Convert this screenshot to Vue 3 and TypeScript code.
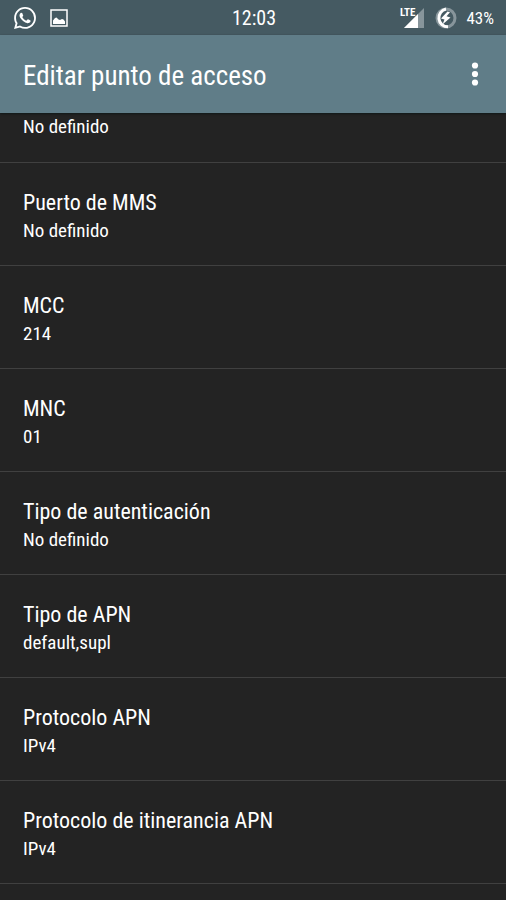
<script setup lang="ts">
interface Preference {
  title?: string
  summary: string
}

const preferences: Preference[] = [
  { summary: 'No definido' },
  { title: 'Puerto de MMS', summary: 'No definido' },
  { title: 'MCC', summary: '214' },
  { title: 'MNC', summary: '01' },
  { title: 'Tipo de autenticación', summary: 'No definido' },
  { title: 'Tipo de APN', summary: 'default,supl' },
  { title: 'Protocolo APN', summary: 'IPv4' },
  { title: 'Protocolo de itinerancia APN', summary: 'IPv4' },
]
</script>

<template>
  <div class="screen">
    <div class="status-bar">
      <div class="notifications">
        <svg class="whatsapp" viewBox="0 0 24 24" aria-hidden="true">
          <path d="M17.472 14.382c-.297-.149-1.758-.867-2.03-.967-.273-.099-.471-.148-.67.15-.197.297-.767.966-.94 1.164-.173.199-.347.223-.644.075-.297-.15-1.255-.463-2.39-1.475-.883-.788-1.48-1.761-1.653-2.059-.173-.297-.018-.458.13-.606.134-.133.298-.347.446-.52.149-.174.198-.298.298-.497.099-.198.05-.371-.025-.52-.075-.149-.669-1.612-.916-2.207-.242-.579-.487-.5-.669-.51-.173-.008-.371-.01-.57-.01-.198 0-.52.074-.792.372-.272.297-1.04 1.016-1.04 2.479 0 1.462 1.065 2.875 1.213 3.074.149.198 2.096 3.2 5.077 4.487.709.306 1.262.489 1.694.625.712.227 1.36.195 1.871.118.571-.085 1.758-.719 2.006-1.413.248-.694.248-1.289.173-1.413-.074-.124-.272-.198-.57-.347m-5.421 7.403h-.004a9.87 9.87 0 01-5.031-1.378l-.361-.214-3.741.982.998-3.648-.235-.374a9.86 9.86 0 01-1.51-5.26c.001-5.45 4.436-9.884 9.888-9.884 2.64 0 5.122 1.03 6.988 2.898a9.825 9.825 0 012.893 6.994c-.003 5.45-4.437 9.884-9.885 9.884m8.413-18.297A11.815 11.815 0 0012.05 0C5.495 0 .16 5.335.157 11.892c0 2.096.547 4.142 1.588 5.945L.057 24l6.305-1.654a11.882 11.882 0 005.683 1.448h.005c6.554 0 11.89-5.335 11.893-11.893a11.821 11.821 0 00-3.48-8.413z" />
        </svg>
        <svg class="picture" viewBox="0 0 18 18" aria-hidden="true">
          <rect class="frame" x="1" y="1" width="16" height="16" />
          <path d="M3 15v-3.500l2-2.500 1.500-.5 2 2 1.500.5 2-1 1.500.5L15 12.500V15z" />
        </svg>
      </div>
      <time class="clock">12:03</time>
      <div class="indicators">
        <span class="network">LTE</span>
        <svg class="signal" viewBox="0 0 20 20" aria-hidden="true">
          <path class="faint" d="M0 20 20 0v20z" />
          <path d="M0 20 14 6v14z" />
        </svg>
        <svg class="battery" viewBox="0 0 22 22" aria-hidden="true">
          <circle class="ring faint-ring" cx="11" cy="11" r="9" />
          <path class="ring" d="M13 19.800A9 9 0 0 1 11 2" />
          <path d="M12.500 4.500 6 11.500l3.500 1L7.500 17.500l8-7-4-1.300 3.500-4z" />
        </svg>
        <span class="level">43%</span>
      </div>
    </div>

    <header class="app-bar">
      <h1>Editar punto de acceso</h1>
      <button class="overflow" type="button" aria-label="Más opciones">
        <svg viewBox="0 0 8 24" aria-hidden="true">
          <circle cx="4" cy="3.500" r="3.100" />
          <circle cx="4" cy="12" r="3.100" />
          <circle cx="4" cy="20.500" r="3.100" />
        </svg>
      </button>
    </header>

    <main>
      <ul class="preferences">
        <li v-for="(item, index) in preferences" :key="index">
          <button class="preference" :class="{ continued: !item.title }" type="button">
            <span v-if="item.title" class="title">{{ item.title }}</span>
            <span class="summary">{{ item.summary }}</span>
          </button>
        </li>
      </ul>
    </main>
  </div>
</template>

<style>
body {
  margin: 0;
  background: #232323;
}
</style>

<style scoped>
.screen {
  min-height: 100vh;
  background: #232323;
  color: #fff;
  font-family: "Roboto Condensed", Roboto, sans-serif;
}

svg {
  display: block;
  fill: #fff;
}

.status-bar {
  display: grid;
  grid-template-columns: 1fr auto 1fr;
  align-items: center;
  height: 35px;
  padding: 0 12px 0 14px;
  background: #455a62;
}

.notifications,
.indicators {
  display: flex;
  align-items: center;
}

.notifications {
  gap: 14px;
}

.whatsapp {
  width: 22px;
  height: 22px;
}

.picture {
  width: 18px;
  height: 18px;
}

.frame {
  fill: none;
  stroke: #fff;
  stroke-width: 1.500;
}

.clock {
  font-size: 20px;
}

.indicators {
  justify-content: flex-end;
}

.network {
  align-self: flex-start;
  margin-right: -11px;
  font-size: 11px;
  line-height: 12px;
  font-weight: 700;
}

.signal {
  width: 20px;
  height: 20px;
}

.faint {
  fill: #87959b;
}

.battery {
  width: 22px;
  height: 22px;
  margin: 0 9px 0 11px;
}

.ring {
  fill: none;
  stroke: #fff;
  stroke-width: 3;
}

.faint-ring {
  stroke: #87959b;
}

.level {
  font-size: 17px;
}

.app-bar {
  position: relative;
  display: flex;
  align-items: center;
  justify-content: space-between;
  height: 78px;
  padding: 0 15px 0 23px;
  background: #607d88;
  box-shadow: 0 1px 2px #101818;
}

h1 {
  margin: 0;
  padding-top: 4px;
  font-size: 27px;
  line-height: 36px;
  font-weight: 400;
}

.overflow {
  padding: 12px;
  border: 0;
  background: none;
}

.overflow svg {
  width: 8px;
  height: 24px;
}

.preferences {
  margin: 0;
  padding: 0;
  list-style: none;
}

.preference {
  display: block;
  width: 100%;
  padding: 26px 23px 20px;
  border: 0;
  border-bottom: 1px solid #404040;
  background: none;
  color: inherit;
  font: inherit;
  text-align: left;
}

.preference.continued {
  padding-top: 0;
  padding-bottom: 21px;
}

.title,
.summary {
  display: block;
  line-height: 28px;
}

.title {
  font-size: 22px;
}

.summary {
  font-size: 19px;
}
</style>
